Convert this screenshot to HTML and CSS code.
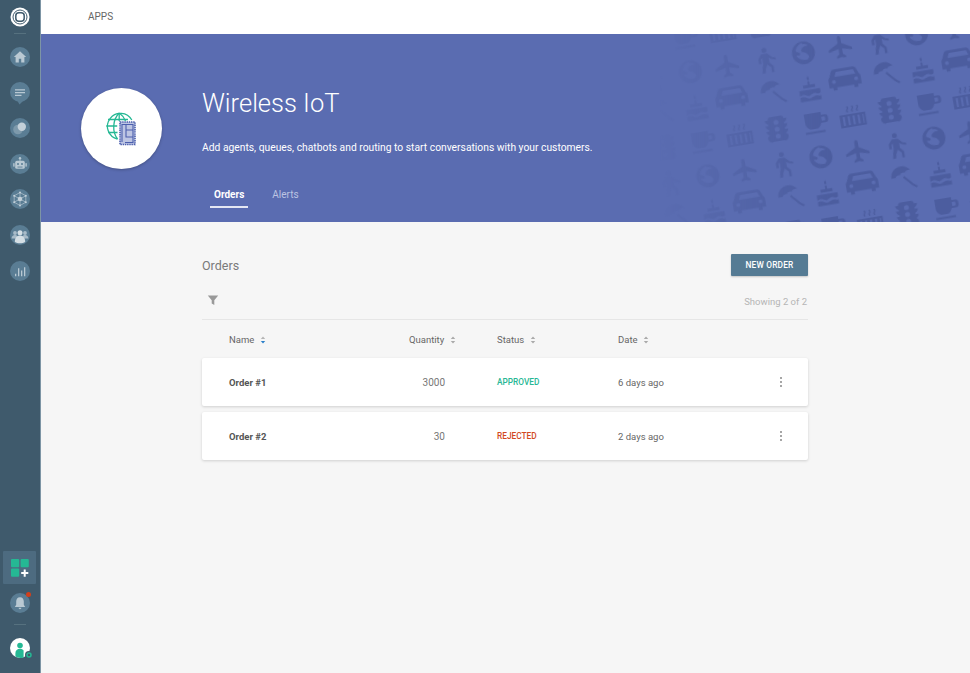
FILE: index.html
```html
<!DOCTYPE html>
<html lang="en">
<head>
  <meta charset="UTF-8" />
  <meta name="viewport" content="width=device-width, initial-scale=1.0" />
  <title>Wireless IoT</title>
  <link rel="stylesheet" href="styles.css">
</head>
<body>
  <div class="app">
    <aside class="sidebar">
      <a class="logo">
        <svg viewBox="0 0 20 20" width="20" height="20">
          <circle cx="10" cy="10" r="9.5" fill="#fff"/>
          <circle cx="10" cy="10" r="7" fill="none" stroke="#3f5a6c" stroke-width="1"/>
          <rect x="5.8" y="5.8" width="8.4" height="8.4" rx="3" fill="none" stroke="#3f5a6c" stroke-width="1.5"/>
        </svg>
      </a>
      <div class="side-rule"></div>
      <nav class="side-nav">
        <a class="side-btn">
          <svg viewBox="0 0 20 20"><path d="M10 4.2 3.8 10H5.6v5.4h3.2v-3.6h2.4v3.6h3.2V10h1.8z" fill="#b9c9d3"/></svg>
        </a>
        <a class="side-btn side-btn-chat">
          <svg viewBox="0 0 20 23"><path d="M7.5 19h5.5l-3.5 3.6z" fill="#5a7d94"/><path d="M5 7.3h10v1.3H5zM5 10h10v1.3H5zM5 12.7h6.5V14H5z" fill="#b9c9d3"/></svg>
        </a>
        <a class="side-btn">
          <svg viewBox="0 0 20 20"><circle cx="8" cy="11.5" r="4.8" fill="#7d99ab"/><circle cx="11.8" cy="8.8" r="4.2" fill="#c3d0d9"/></svg>
        </a>
        <a class="side-btn">
          <svg viewBox="0 0 20 20"><circle cx="10" cy="4.3" r="1.2" fill="#b9c9d3"/><path d="M9.6 5h.8v2h-.8z" fill="#b9c9d3"/><rect x="5.2" y="6.8" width="9.6" height="8" rx="1.6" fill="#b9c9d3"/><rect x="3.2" y="9.2" width="1.4" height="3.4" fill="#b9c9d3"/><rect x="15.4" y="9.2" width="1.4" height="3.4" fill="#b9c9d3"/><circle cx="8" cy="10" r="1" fill="#5a7d94"/><circle cx="12" cy="10" r="1" fill="#5a7d94"/><path d="M7.5 12.6h5v.9h-5z" fill="#5a7d94"/></svg>
        </a>
        <a class="side-btn">
          <svg viewBox="0 0 20 20"><path d="M10 3.5 15.8 6.8v6.4L10 16.5 4.2 13.2V6.8zM10 3.5v13M4.2 6.8l11.6 6.4M15.8 6.8 4.2 13.2" fill="none" stroke="#a9bcc9" stroke-width=".8"/><circle cx="10" cy="10" r="2.3" fill="#c3d0d9"/><circle cx="10" cy="3.5" r="1" fill="#c3d0d9"/><circle cx="10" cy="16.5" r="1" fill="#c3d0d9"/><circle cx="4.2" cy="6.8" r="1" fill="#c3d0d9"/><circle cx="15.8" cy="6.8" r="1" fill="#c3d0d9"/><circle cx="4.2" cy="13.2" r="1" fill="#c3d0d9"/><circle cx="15.8" cy="13.2" r="1" fill="#c3d0d9"/></svg>
        </a>
        <a class="side-btn">
          <svg viewBox="0 0 20 20"><circle cx="5" cy="8" r="1.9" fill="#a9bcc9"/><circle cx="15" cy="8" r="1.9" fill="#a9bcc9"/><path d="M1.6 13.5c0-2.4 1.4-3.6 3.4-3.6s3.4 1.2 3.4 3.6zM11.6 13.5c0-2.4 1.4-3.6 3.4-3.6s3.4 1.2 3.4 3.6z" fill="#a9bcc9"/><circle cx="10" cy="7.8" r="2.5" fill="#d5dfe5"/><path d="M4.8 17c0-4 2.2-6.4 5.2-6.4s5.2 2.4 5.2 6.4c-1.4.8-3.2 1.3-5.2 1.3s-3.8-.5-5.2-1.3z" fill="#d5dfe5"/></svg>
        </a>
        <a class="side-btn">
          <svg viewBox="0 0 20 20"><path d="M5 12.8h1.3v2.4H5zM8 7.2h1.3v8H8zM11 9.6h1.3v5.6H11zM14 6.2h1.3v9H14z" fill="#b9c9d3"/></svg>
        </a>
      </nav>

      <div class="side-bottom">
        <a class="apps-tile">
          <svg viewBox="0 0 20 20" width="20" height="20">
            <rect x="1" y="1" width="8.2" height="8.2" rx="1" fill="#25b894"/>
            <rect x="10.6" y="1" width="8.2" height="8.2" rx="1" fill="#25b894"/>
            <rect x="1" y="10.6" width="8.2" height="8.2" rx="1" fill="#25b894"/>
            <path d="M13.7 11.6h2v2.5h2.6v2h-2.6v2.6h-2v-2.6h-2.5v-2h2.5z" fill="#fff"/>
          </svg>
        </a>
        <a class="side-btn side-btn-bell">
          <svg viewBox="0 0 20 20"><path d="M10 4.2c-2.6 0-3.8 2-3.8 4.4v3.2L4.8 14h10.4l-1.4-2.2V8.6c0-2.4-1.2-4.4-3.8-4.4z" fill="#b9c9d3"/><path d="M8.6 14.8h2.8a1.4 1.4 0 0 1-2.8 0z" fill="#b9c9d3"/></svg>
          <span class="bell-dot"></span>
        </a>
        <div class="side-rule side-rule-low"></div>
        <a class="avatar">
          <svg viewBox="0 0 24 24" width="24" height="24">
            <circle cx="10" cy="10" r="10" fill="#fff"/>
            <circle cx="10" cy="7.5" r="2.8" fill="#25b894"/>
            <path d="M5.4 18.6v-3.4c0-2.6 2-4.4 4.6-4.4 1.6 0 2.8.6 3.6 1.6v7a10 10 0 0 1-8.2-.8z" fill="#25b894"/>
            <circle cx="19" cy="17" r="4" fill="#3f5a6c"/>
            <circle cx="19" cy="17" r="2" fill="none" stroke="#25b894" stroke-width="1.5"/>
          </svg>
        </a>
      </div>
    </aside>

    <div class="page">
      <header class="topbar">APPS</header>

      <section class="hero">
        <svg class="hero-pattern" width="310" height="188" aria-hidden="true">
          <defs>
            <pattern id="glyphs" width="114.6" height="105.6" patternUnits="userSpaceOnUse" patternTransform="translate(-110 8) rotate(-9.5)">
              <!-- row 1: cup, radiator, traffic light -->
              <g fill="#4c5d9f">
                <path d="M9 8h17v3h3.500a3 3 0 0 1 3 3v2a3 3 0 0 1-3 3h-4.500c-1 3-3 5-5 5H15c-3 0-6-3-6-7zM26 13v4h2.500a1 1 0 0 0 1-1v-2a1 1 0 0 0-1-1zM8 26.500h20v2H8z"/>
                <path d="M44 15h26v13H44zM47 17v9h2v-9zM52 17v9h2v-9zM57 17v9h2v-9zM62 17v9h2v-9zM67 17v9h1v-9zM52 13c-2-3 2-3 0-6h1.500c2 3-2 3 0 6zM57 13c-2-3 2-3 0-6h1.500c2 3-2 3 0 6zM62 13c-2-3 2-3 0-6h1.500c2 3-2 3 0 6z" fill-rule="evenodd"/>
                <path d="M90 5h10a3 3 0 0 1 3 3h3c0 2-1.500 3.500-3 4v1.500h3c0 2-1.500 3.500-3 4v1.500h3c0 2-1.500 3.500-3 4a3 3 0 0 1-3 7h-10a3 3 0 0 1-3-7c-1.500-.5-3-2-3-4h3v-1.500c-1.500-.5-3-2-3-4h3V12c-1.500-.5-3-2-3-4h3a3 3 0 0 1 3-3zM95 8.500a2.500 2.500 0 1 0 0 5 2.500 2.500 0 0 0 0-5zM95 15.500a2.500 2.500 0 1 0 0 5 2.500 2.500 0 0 0 0-5zM95 22.500a2.500 2.500 0 1 0 0 5 2.500 2.500 0 0 0 0-5z" fill-rule="evenodd"/>
              </g>
              <!-- row 2: globe, plane, walker -->
              <g fill="#4c5d9f">
                <path d="M19 41a11.500 11.500 0 1 0 0 23 11.500 11.500 0 0 0 0-23zM19 43.500c2 0 4 .7 5.500 2-1.500 1-3 0-4.500 1s-3 2-3 3.500 2 2 3.500 2.500 2 2 3 3 0 3-1 4c-4 1-9-1-11-5 2-1 3 1 4-1s-3-2-4-4c1-3.500 4-6.500 7.500-7z" fill-rule="evenodd"/>
                <path d="M56 41.500c1 0 1.800 1 1.800 3v4.500l10 5.500v2.500l-10-2.500v5.500l2.700 2v2l-4.500-1-4.500 1v-2l2.700-2V54.500l-10 2.500v-2.500l10-5.500v-4.500c0-2 .8-3 1.800-3z"/>
                <path d="M95 41a2.500 2.500 0 1 1 0 5 2.500 2.500 0 0 1 0-5zM91.500 47h6l4.500 4.500 3.500 1-.5 2-4.500-1.500-2-1.500v5l3.500 4v6h-2.500v-5l-3.500-3.500-2 4-1 4.500H90l1-6 1-3.500v-6l-1.500 1.500v4h-2.500v-5z"/>
              </g>
              <!-- row 3: cake, car, umbrella -->
              <g fill="#4c5d9f">
                <path d="M19 76c1.500 2 1.500 3.500 0 4.500-1.500-1-1.500-2.500 0-4.500zM18 81.500h2v3.500h5v3H13v-3h5zM8.500 90h21v4c-3.500 3-3.500-1-7 0s-3.500 3-7 1.500-3.500-2-7 0zM8.500 97c3-1.500 4-.5 7 1s4.500 0 7.500-1 4 1 6.500 0v4h-21z"/>
                <path d="M47 78h19c2 0 3 1 3.500 3l2 5c1 1 1.500 2 1.500 3v8h-4v3h-4v-3H47v3h-4v-3h-4v-8c0-1 .5-2 1.500-3l2-5c.5-2 1.500-3 3.500-3zM48 81l-2 5h22l-2-5zM44.500 89a2 2 0 1 0 0 4 2 2 0 0 0 0-4zM68 89a2 2 0 1 0 0 4 2 2 0 0 0 0-4z" fill-rule="evenodd" transform="translate(1.500 -1) scale(.96)"/>
                <path d="M85 86c0-7 5-11 11-11 4 0 7 2 9 5-3-.5-5 0-6 2-2-1-4-.5-5 1.500-2-.5-4 0-5 2.500-1.500-.5-3-.5-4 0zM98 85l8 9 4 3-1.500 1.500-4-3-8-9z"/>
              </g>
            </pattern>
          </defs>
          <rect width="310" height="188" fill="url(#glyphs)"/>
        </svg>

        <div class="hero-logo">
          <svg viewBox="0 0 40 40" width="40" height="40">
            <g fill="none" stroke="#25b894" stroke-width="1.300">
              <path d="M15.500 30A13 13 0 1 1 29.800 11"/>
              <path d="M17.200 4c-7 7-7 19-1.700 26M17.200 4c3 2 5 4.500 6.300 8"/>
              <path d="M4.200 17h11M6 10.500h20M6.200 23.500h9.300"/>
              <path d="M17.200 4v8"/>
            </g>
            <rect x="18" y="13" width="15" height="22.500" fill="#bdc5e3" stroke="#4c5fae" stroke-width="1.600" stroke-dasharray="1.400 .8"/>
            <path d="M20 15v18M20.500 15.500H31v18h-8M24 15.500v12.500h7M24 21h7" fill="none" stroke="#4c5fae" stroke-width="1.100"/>
          </svg>
        </div>

        <div class="hero-text">
          <h1 class="hero-title">Wireless IoT</h1>
          <p class="hero-desc">Add agents, queues, chatbots and routing to start conversations with your customers.</p>
          <div class="tabs">
            <a class="tab active">Orders</a>
            <a class="tab">Alerts</a>
          </div>
        </div>
      </section>

      <main class="content">
        <div class="title-row">
          <h2 class="section-title">Orders</h2>
          <button class="btn-new" type="button">NEW ORDER</button>
        </div>

        <div class="toolbar">
          <svg class="filter-icon" viewBox="0 0 12 12" width="12" height="12"><path d="M.8 1.500h10.400L7.300 6.200V11L4.700 9.600V6.200z" fill="#999"/></svg>
          <span class="showing">Showing 2 of 2</span>
        </div>

        <div class="row row-head">
          <span class="cell-name">Name <svg class="sort" viewBox="0 0 6 9"><path d="M3 .5 5.500 3.500h-5z" fill="#b5b5b5"/><path d="M3 8.500.5 5.500h5z" fill="#2a7fc9"/></svg></span>
          <span class="cell-qty">Quantity <svg class="sort" viewBox="0 0 6 9"><path d="M3 .5 5.500 3.500h-5zM3 8.500.5 5.500h5z" fill="#aaa"/></svg></span>
          <span class="cell-status">Status <svg class="sort" viewBox="0 0 6 9"><path d="M3 .5 5.500 3.500h-5zM3 8.500.5 5.500h5z" fill="#aaa"/></svg></span>
          <span class="cell-date">Date <svg class="sort" viewBox="0 0 6 9"><path d="M3 .5 5.500 3.500h-5zM3 8.500.5 5.500h5z" fill="#aaa"/></svg></span>
        </div>

        <div class="row card">
          <span class="cell-name order-name">Order #1</span>
          <span class="cell-qty order-qty">3000</span>
          <span class="cell-status status approved">APPROVED</span>
          <span class="cell-date">6 days ago</span>
          <span class="dots"><i></i><i></i><i></i></span>
        </div>
        <div class="row card">
          <span class="cell-name order-name">Order #2</span>
          <span class="cell-qty order-qty">30</span>
          <span class="cell-status status rejected">REJECTED</span>
          <span class="cell-date">2 days ago</span>
          <span class="dots"><i></i><i></i><i></i></span>
        </div>
      </main>
    </div>
  </div>
</body>
</html>
```

FILE: styles.css
```css
* {
  box-sizing: border-box;
}

html,
body {
  height: 100%;
}

body {
  margin: 0;
  font-family: Roboto, 'Liberation Sans', sans-serif;
  background: #f6f6f6;
  color: #666;
  overflow: hidden;
}

.app {
  display: flex;
  height: 100%;
}

/* sidebar */
.sidebar {
  width: 41px;
  flex-shrink: 0;
  display: flex;
  flex-direction: column;
  align-items: center;
  background: #3f5a6c;
  border-right: 1px solid #7d95a5;
  padding: 7px 1px 0 0;
}

.logo {
  display: block;
  height: 20px;
}

.logo svg {
  display: block;
}

.side-rule {
  width: 12px;
  height: 1px;
  margin-top: 6px;
  background: #56717f;
}

.side-rule-low {
  margin: 11px 0 0;
}

.side-nav {
  display: flex;
  flex-direction: column;
  align-items: center;
  gap: 15.700px;
  margin-top: 12.500px;
}

.side-btn {
  position: relative;
  display: block;
  width: 20px;
  height: 20px;
  border-radius: 50%;
  background: #5a7d94;
}

.side-btn svg {
  display: block;
  width: 20px;
  height: 20px;
}

.side-btn-chat svg {
  height: 23px;
}

.side-bottom {
  margin-top: auto;
  display: flex;
  flex-direction: column;
  align-items: center;
  padding-bottom: 11px;
}

.apps-tile {
  display: flex;
  align-items: center;
  justify-content: center;
  width: 33px;
  height: 33px;
  background: #4d6b80;
  border-radius: 1px;
}

.side-btn-bell {
  margin-top: 9px;
}

.bell-dot {
  position: absolute;
  top: -1px;
  right: -1px;
  width: 5px;
  height: 5px;
  border-radius: 50%;
  background: #d2401c;
}

.avatar {
  display: block;
  width: 24px;
  height: 24px;
  margin: 13px 0 0 4px;
}

.avatar svg {
  display: block;
}

/* top bar and hero */
.page {
  flex: 1;
  min-width: 0;
  display: flex;
  flex-direction: column;
}

.topbar {
  height: 34px;
  padding: 0 0 0 47px;
  line-height: 34px;
  font-size: 10px;
  color: #666;
  background: #fff;
}

.hero {
  position: relative;
  display: flex;
  height: 188px;
  padding: 54px 0 0 40px;
  background: #5a6cb1;
  color: #fff;
  overflow: hidden;
}

.hero-pattern {
  position: absolute;
  top: 0;
  right: 0;
  -webkit-mask-image: linear-gradient(to right, transparent, #000 55%);
  mask-image: linear-gradient(to right, transparent, #000 55%);
}

.hero-logo {
  width: 81px;
  height: 81px;
  flex-shrink: 0;
  display: flex;
  align-items: center;
  justify-content: center;
  border-radius: 50%;
  background: #fff;
  box-shadow: 0 1px 3px rgba(0, 0, 0, 0.25);
}

.hero-text {
  position: relative;
  display: flex;
  flex-direction: column;
  margin-left: 40px;
}

.hero-title {
  margin: 0;
  font-size: 25.500px;
  font-weight: 300;
  line-height: 30px;
}

.hero-desc {
  margin: 23px 0 0;
  font-size: 10.300px;
  line-height: 14px;
}

.tabs {
  display: flex;
  gap: 20px;
  margin: 32px 0 0 8px;
}

.tab {
  padding: 0 4px 6px;
  height: 21px;
  font-size: 10px;
  line-height: 15px;
  color: #bcc4e2;
}

.tab.active {
  font-weight: 700;
  color: #fff;
  border-bottom: 2px solid #e4e7f3;
}

/* orders list */
.content {
  flex: 1;
  width: 606px;
  margin-left: 161px;
  padding-top: 32px;
}

.title-row {
  display: flex;
  align-items: center;
  justify-content: space-between;
}

.section-title {
  margin: 0;
  font-size: 12.500px;
  font-weight: 400;
  color: #7a7a7a;
}

.btn-new {
  width: 77px;
  height: 22px;
  padding: 0;
  border: none;
  border-radius: 1px;
  font-family: inherit;
  font-size: 8.300px;
  font-weight: 500;
  letter-spacing: 0.2px;
  color: #fff;
  background: #557b94;
  box-shadow: 0 1px 2px rgba(0, 0, 0, 0.2);
}

.toolbar {
  display: flex;
  align-items: center;
  justify-content: space-between;
  height: 35px;
  margin-top: 9px;
  padding: 0 1px 0 5px;
  border-bottom: 1px solid #e6e6e6;
}

.filter-icon {
  display: block;
  margin-top: -4px;
}

.showing {
  font-size: 9.500px;
  color: #b5b5b5;
  margin-top: -2px;
}

.row {
  display: flex;
  align-items: center;
  padding-left: 27px;
}

.row-head {
  height: 38px;
  font-size: 9.500px;
  color: #666;
}

.cell-name {
  width: 180px;
}

.cell-qty {
  width: 88px;
}

.cell-status {
  width: 121px;
}

.cell-date {
  flex: 1;
}

.sort {
  display: inline-block;
  width: 6px;
  height: 8px;
  margin-left: 3px;
  vertical-align: -1px;
}

.card {
  position: relative;
  height: 48px;
  margin-bottom: 6px;
  font-size: 9.500px;
  background: #fff;
  border-radius: 2px;
  box-shadow: 0 1px 3px rgba(0, 0, 0, 0.16);
}

.order-name {
  font-weight: 700;
  color: #555;
}

.order-qty {
  padding-right: 52px;
  text-align: right;
  font-size: 10px;
  color: #777;
}

.status {
  font-size: 8.300px;
  font-weight: 500;
}

.approved {
  color: #27b795;
}

.rejected {
  color: #d2491f;
}

.dots {
  display: flex;
  flex-direction: column;
  gap: 2px;
  margin-right: 26px;
}

.dots i {
  display: block;
  width: 2px;
  height: 2px;
  border-radius: 50%;
  background: #888;
}
```
